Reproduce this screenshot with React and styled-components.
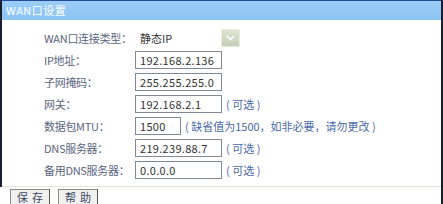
import React from 'react';
import styled, { createGlobalStyle } from 'styled-components';

const GlobalStyle = createGlobalStyle`
  html, body {
    margin: 0;
    padding: 0;
    background: #fff;
  }
  body {
    font-family: "Noto Sans CJK SC", "DejaVu Sans", sans-serif;
    font-size: 12px;
  }
`;

const Page = styled.div`
  width: 443px;
  height: 204px;
  overflow: hidden;
  display: flex;
  flex-direction: column;
  box-sizing: border-box;
  border-right: 2px solid #1a1f2e;
`;

const Panel = styled.div`
  border-left: 2px solid #1a1f2e;
  border-top: 1px solid #244a9a;
  display: flex;
  flex-direction: column;
`;

const Header = styled.div`
  height: 19px;
  background: linear-gradient(#9ccdf8, #8cc4f3);
  color: #fff;
  font-size: 11px;
  line-height: 19px;
  padding-left: 4px;
  letter-spacing: 0.5px;
`;

const Form = styled.div`
  display: flex;
  flex-direction: column;
  padding: 7px 0 5px 42px;
  border-bottom: 1px solid #e4e2d6;
`;

const Row = styled.div`
  display: flex;
  align-items: center;
  height: 22px;
`;

const Label = styled.div`
  width: 91px;
  color: #5a6580;
  font-size: 11px;
  letter-spacing: -0.3px;
  white-space: nowrap;
`;

const Input = styled.div`
  box-sizing: border-box;
  width: ${(p) => p.$w || 87}px;
  height: 18px;
  border: 1px solid #7f8a99;
  padding-left: 4px;
  color: #333;
  font-size: 11px;
  line-height: 16px;
  letter-spacing: 0.3px;
  background: #fff;
`;

const Select = styled.div`
  box-sizing: border-box;
  width: 105px;
  height: 19px;
  display: flex;
  align-items: center;
  justify-content: space-between;
  padding-left: 5px;
  color: #333;
  font-size: 11px;
`;

const Arrow = styled.div`
  width: 17px;
  height: 16px;
  background: linear-gradient(#dfe5d3, #c6cdb8);
  border: 1px solid #e8ecdf;
  display: flex;
  align-items: center;
  justify-content: center;
`;

const Hint = styled.span`
  color: #4b6aa8;
  font-size: 11px;
  margin-left: 4px;
  white-space: nowrap;
`;

const Footer = styled.div`
  display: flex;
  gap: 8px;
  padding: 2px 0 0 10px;
`;

const Button = styled.button`
  box-sizing: border-box;
  width: 40px;
  height: 16px;
  margin: 0;
  padding: 0;
  border: 1px solid #8b8b8b;
  border-right-color: #555;
  border-bottom-color: #555;
  background: #f0f0ee;
  color: #3a4866;
  font-family: inherit;
  font-size: 11px;
  line-height: 13px;
  letter-spacing: 4px;
  text-indent: 4px;
`;

const rows = [
  { label: 'IP地址：', value: '192.168.2.136' },
  { label: '子网掩码：', value: '255.255.255.0' },
  { label: '网关：', value: '192.168.2.1', hint: '( 可选 )' },
  { label: '数据包MTU：', value: '1500', w: 46, hint: '( 缺省值为1500，如非必要，请勿更改 )' },
  { label: 'DNS服务器：', value: '219.239.88.7', hint: '( 可选 )' },
  { label: '备用DNS服务器：', value: '0.0.0.0', hint: '( 可选 )' },
];

export default function App() {
  return (
    <>
      <GlobalStyle />
      <Page>
        <Panel>
          <Header>WAN口设置</Header>
          <Form>
            <Row>
              <Label>WAN口连接类型：</Label>
              <Select>
                静态IP
                <Arrow>
                  <svg width="9" height="6" viewBox="0 0 9 6">
                    <path d="M1 1 L4.5 4.5 L8 1" fill="none" stroke="#fff" strokeWidth="1.6" />
                  </svg>
                </Arrow>
              </Select>
            </Row>
            {rows.map((r) => (
              <Row key={r.label}>
                <Label>{r.label}</Label>
                <Input $w={r.w}>{r.value}</Input>
                {r.hint && <Hint>{r.hint}</Hint>}
              </Row>
            ))}
          </Form>
        </Panel>
        <Footer>
          <Button>保存</Button>
          <Button>帮助</Button>
        </Footer>
      </Page>
    </>
  );
}
